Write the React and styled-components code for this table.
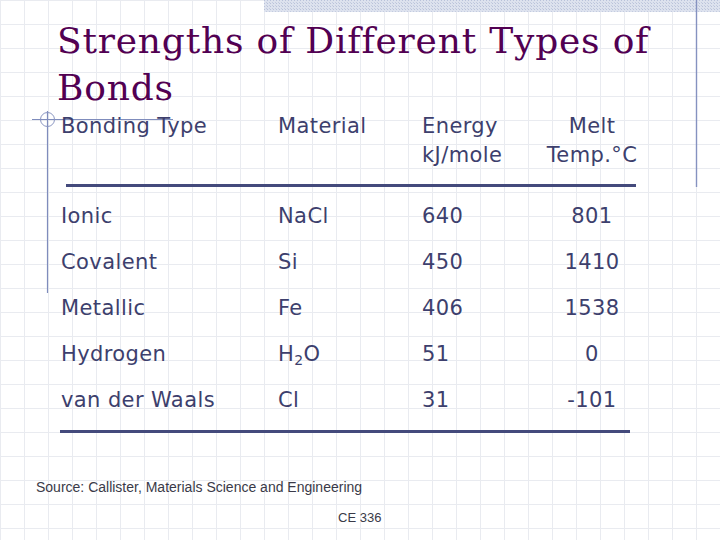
import React from 'react'
import styled, { createGlobalStyle } from 'styled-components'

const GlobalStyle = createGlobalStyle`
  html, body {
    margin: 0;
    padding: 0;
    background: #fff;
  }
`

const ink = '#3d3f6d'
const rule = '#444a7c'

const StyledSlide = styled.div`
  position: relative;
  width: 720px;
  height: 540px;
  overflow: hidden;
  background-color: #fff;
  background-image: linear-gradient(to right, #e9ebf0 1px, transparent 1px),
    linear-gradient(to bottom, #e9ebf0 1px, transparent 1px);
  background-size: 24px 24px;
  background-position: 0 0;
`

const StyledOrnament = styled.svg`
  position: absolute;
  left: 0;
  top: 0;
  pointer-events: none;
`

const StyledContent = styled.div`
  position: relative;
  display: flex;
  flex-direction: column;
  padding-top: 17px;
`

const StyledTitle = styled.h1`
  margin: 0 0 0 57px;
  font-family: 'DejaVu Serif', 'Liberation Serif', serif;
  font-weight: normal;
  font-size: 36px;
  line-height: 47px;
  letter-spacing: 0.8px;
  color: #520052;
`

const StyledTable = styled.div`
  display: grid;
  grid-template-columns: 217px 144px 118px 104px;
  margin-left: 61px;
  margin-top: 1px;
  font-family: 'DejaVu Sans', 'Liberation Sans', sans-serif;
  font-size: 21px;
  letter-spacing: 0.4px;
  color: ${ink};
`

const StyledHead = styled.div`
  line-height: 29px;
  text-align: ${({ center }) => (center ? 'center' : 'left')};
  white-space: nowrap;
`

const StyledCell = styled.div`
  line-height: 46px;
  text-align: ${({ center }) => (center ? 'center' : 'left')};
  white-space: nowrap;
  sub {
    font-size: 14px;
    line-height: 0;
    vertical-align: -4px;
  }
`

const StyledRule = styled.div`
  grid-column: 1 / -1;
  height: 3px;
  width: 570px;
  background: ${rule};
  margin-left: ${({ shift }) => shift}px;
  margin-top: ${({ gap }) => gap}px;
  margin-bottom: ${({ after }) => after}px;
`

const StyledSource = styled.div`
  margin: 46px 0 0 36px;
  font-family: 'Liberation Sans', Arial, sans-serif;
  font-size: 14px;
  line-height: 16px;
  color: #3a3a48;
`

const StyledFooter = styled.div`
  margin: 15px 0 0 338px;
  font-family: 'Liberation Sans', Arial, sans-serif;
  font-size: 13px;
  line-height: 16px;
  color: #3a3a48;
`

const rows = [
  ['Ionic', 'NaCl', '640', '801'],
  ['Covalent', 'Si', '450', '1410'],
  ['Metallic', 'Fe', '406', '1538'],
  ['Hydrogen', <>H<sub>2</sub>O</>, '51', '0'],
  ['van der Waals', 'Cl', '31', '-101'],
]

function Ornament() {
  return (
    <StyledOrnament width="720" height="540" viewBox="0 0 720 540">
      <defs>
        <pattern id="hatch" width="3" height="3" patternUnits="userSpaceOnUse">
          <rect width="3" height="3" fill="#dde2ee" />
          <rect width="1" height="1" fill="#b9c2da" />
          <rect x="2" y="2" width="1" height="1" fill="#c4cce0" />
        </pattern>
      </defs>
      <rect x="264" y="0" width="456" height="12" fill="url(#hatch)" />
      <line x1="696.5" y1="0" x2="696.5" y2="187" stroke="#8592c0" strokeWidth="1.4" />
      <line x1="32" y1="119.5" x2="173" y2="119.5" stroke="#7f8cbc" strokeWidth="1.2" />
      <line x1="47.5" y1="111" x2="47.5" y2="293" stroke="#7f8cbc" strokeWidth="1.2" />
      <circle cx="47.5" cy="119.5" r="7" fill="none" stroke="#8a96c2" strokeWidth="1" />
    </StyledOrnament>
  )
}

export default function App() {
  return (
    <>
      <GlobalStyle />
      <StyledSlide>
        <Ornament />
        <StyledContent>
          <StyledTitle>
            Strengths of Different Types of
            <br />
            Bonds
          </StyledTitle>
          <StyledTable>
            <StyledHead>Bonding Type</StyledHead>
            <StyledHead>Material</StyledHead>
            <StyledHead>
              Energy
              <br />
              kJ/mole
            </StyledHead>
            <StyledHead center>
              Melt
              <br />
              Temp.°C
            </StyledHead>
            <StyledRule shift={5} gap={14} after={6} />
            {rows.map((row, rowIdx) =>
              row.map((value, colIdx) => (
                <StyledCell key={`${rowIdx}-${colIdx}`} center={colIdx === 3}>
                  {value}
                </StyledCell>
              )),
            )}
            <StyledRule shift={-1} gap={7} after={0} />
          </StyledTable>
          <StyledSource>Source: Callister, Materials Science and Engineering</StyledSource>
          <StyledFooter>CE 336</StyledFooter>
        </StyledContent>
      </StyledSlide>
    </>
  )
}
